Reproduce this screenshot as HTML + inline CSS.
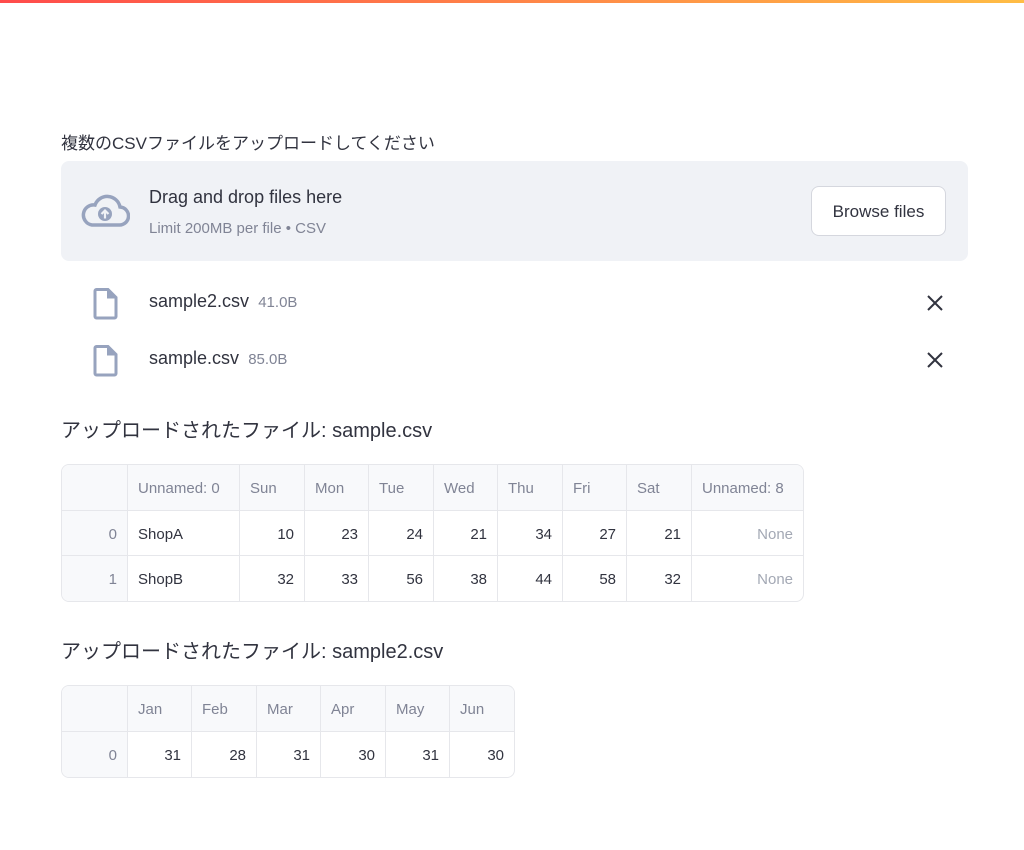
<!DOCTYPE html><html><head><meta charset="utf-8"><style>
body{margin:0;width:1024px;height:850px;background:#fff;font-family:"Liberation Sans","Noto Sans CJK JP",sans-serif;color:#31333f;position:relative;overflow:hidden}
.a{position:absolute;white-space:nowrap}
.bar{position:absolute;left:0;top:0;width:1024px;height:3px;background:linear-gradient(90deg,#ff4b4b,#ffbd45)}
table{position:absolute;border-collapse:separate;border-spacing:0;border:1px solid #e6e7eb;border-radius:8px;font-size:15px;overflow:hidden}
td{border-right:1px solid #e6e7eb;border-bottom:1px solid #e6e7eb;padding:2px 10px 0;box-sizing:border-box;text-align:right}
tr:last-child td{border-bottom:none}td:last-child{border-right:none}
tr.h td{background:#f8f9fb;color:#808495;text-align:left}
td.i{color:#808495;background:#f8f9fb}
td.l{text-align:left}td.n{color:#a3a8b4}
</style></head><body>
<div class="bar"></div>
<div class="a" style="left:61px;top:129px;font-size:17px">複数のCSVファイルをアップロードしてください</div>
<div class="a" style="left:61px;top:161px;width:907px;height:100px;background:#f0f2f6;border-radius:8px"></div>
<svg class="a" style="left:80px;top:194px" width="50" height="36" viewBox="0 0 50 36"><path d="M12 31h27a9 9 0 0 0 1-18A13 13 0 0 0 15 11 10 10 0 0 0 12 31z" fill="none" stroke="#97a3be" stroke-width="3.5"/><circle cx="25" cy="20" r="7" fill="#97a3be"/><path d="M25 24.5v-8M21.5 20 25 16.5l3.5 3.5" stroke="#f0f2f6" stroke-width="2.2" fill="none"/></svg>
<div class="a" style="left:149px;top:187px;font-size:18px">Drag and drop files here</div>
<div class="a" style="left:149px;top:220px;font-size:15px;color:#808495">Limit 200MB per file • CSV</div>
<div class="a" style="left:811px;top:186px;width:135px;height:50px;box-sizing:border-box;border:1px solid #d5d7de;border-radius:8px;background:#fff;font-size:17px;line-height:50px;text-align:center">Browse files</div>
<svg class="a" style="left:93px;top:288px" width="25" height="32" viewBox="0 0 25 32"><path d="M2 3a1.5 1.5 0 0 1 1.5-1.5H15L23 9.5v19a1.5 1.5 0 0 1-1.5 1.5h-18A1.5 1.5 0 0 1 2 28.5z" fill="none" stroke="#97a3be" stroke-width="3"/><path d="M14 1.5v9h9z" fill="#97a3be"/></svg>
<svg class="a" style="left:93px;top:345px" width="25" height="32" viewBox="0 0 25 32"><path d="M2 3a1.5 1.5 0 0 1 1.5-1.5H15L23 9.5v19a1.5 1.5 0 0 1-1.5 1.5h-18A1.5 1.5 0 0 1 2 28.5z" fill="none" stroke="#97a3be" stroke-width="3"/><path d="M14 1.5v9h9z" fill="#97a3be"/></svg>
<div class="a" style="left:149px;top:291px;font-size:18px">sample2.csv <span style="font-size:15px;color:#808495">&nbsp;41.0B</span></div>
<div class="a" style="left:149px;top:348px;font-size:18px">sample.csv <span style="font-size:15px;color:#808495">&nbsp;85.0B</span></div>
<svg class="a" style="left:926px;top:294px" width="18" height="18"><path d="M2 2l14 14M16 2 2 16" stroke="#31333f" stroke-width="2"/></svg>
<svg class="a" style="left:926px;top:351px" width="18" height="18"><path d="M2 2l14 14M16 2 2 16" stroke="#31333f" stroke-width="2"/></svg>
<div class="a" style="left:61px;top:414px;font-size:20px">アップロードされたファイル: sample.csv</div>
<table style="left:61px;top:464px;width:743px">
<tr class="h" style="height:46px"><td style="width:66px"></td><td style="width:112px">Unnamed: 0</td><td style="width:65px">Sun</td><td style="width:64px">Mon</td><td style="width:65px">Tue</td><td style="width:64px">Wed</td><td style="width:65px">Thu</td><td style="width:64px">Fri</td><td style="width:65px">Sat</td><td>Unnamed: 8</td></tr>
<tr style="height:45px"><td class="i">0</td><td class="l">ShopA</td><td>10</td><td>23</td><td>24</td><td>21</td><td>34</td><td>27</td><td>21</td><td class="n">None</td></tr>
<tr style="height:45px"><td class="i">1</td><td class="l">ShopB</td><td>32</td><td>33</td><td>56</td><td>38</td><td>44</td><td>58</td><td>32</td><td class="n">None</td></tr>
</table>
<div class="a" style="left:61px;top:635px;font-size:20px">アップロードされたファイル: sample2.csv</div>
<table style="left:61px;top:685px;width:454px">
<tr class="h" style="height:46px"><td style="width:66px"></td><td style="width:64px">Jan</td><td style="width:65px">Feb</td><td style="width:64px">Mar</td><td style="width:65px">Apr</td><td style="width:64px">May</td><td>Jun</td></tr>
<tr style="height:45px"><td class="i">0</td><td>31</td><td>28</td><td>31</td><td>30</td><td>31</td><td>30</td></tr>
</table>
</body></html>
